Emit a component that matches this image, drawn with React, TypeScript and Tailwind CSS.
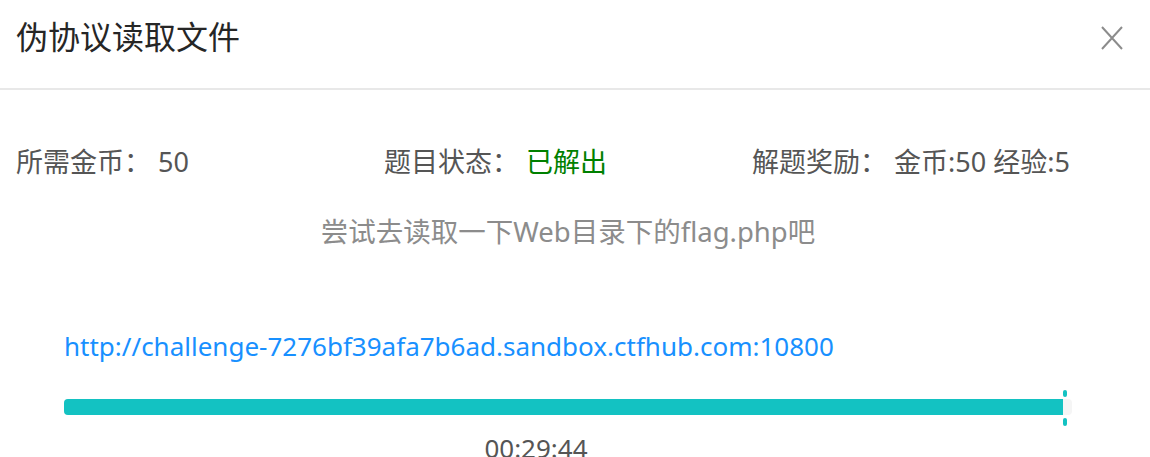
export default function App() {
  const font = { fontFamily: '"Noto Sans", "Noto Sans CJK SC", sans-serif' };
  return (
    <div className="w-[1150px] h-[457px] bg-white overflow-hidden relative" style={font}>
      <div className="h-[90px] border-b-2 border-[#e8e8e8] flex items-start justify-between pl-4 pr-[27px] pt-[17px]">
        <div className="text-[32px] leading-[40px] text-[#262626]">伪协议读取文件</div>
        <svg width="22" height="24" viewBox="0 0 22 24" className="mt-[9px]">
          <path d="M1 1 L21 23 M21 1 L1 23" stroke="#8c8c8c" strokeWidth="2" fill="none" />
        </svg>
      </div>
      <div className="pl-4 pr-[30px]">
        <div className="grid grid-cols-3 mt-[54px] text-[27px] leading-[36px] text-[#555]">
          <div>所需金币： 50</div>
          <div>
            题目状态： <span className="text-[#008000]">已解出</span>
          </div>
          <div>解题奖励： 金币:50 经验:5</div>
        </div>
        <div className="mt-[34px] text-center text-[27.5px] leading-[36px] text-[#8c8c8c]">
          尝试去读取一下Web目录下的flag.php吧
        </div>
        <div className="px-12">
          <div className="mt-[78px] text-[26px] leading-[36px] text-[#1890ff]">
            http://challenge-7276bf39afa7b6ad.sandbox.ctfhub.com:10800
          </div>
          <div className="relative mt-[35px] h-[16px] bg-[#f5f5f5] rounded-sm">
            <div className="h-full w-[999px] bg-[#13c2c2] rounded-l-sm" />
            <div className="absolute left-[999px] top-[-9px] w-[4px] h-[7px] rounded-full bg-[#13c2c2]" />
            <div className="absolute left-[999px] top-[19px] w-[4px] h-[8px] rounded-full bg-[#13c2c2]" />
          </div>
        </div>
      </div>
      <div className="w-[1072px] text-center mt-[15px] text-[26px] leading-[36px] text-[#555]">00:29:44</div>
    </div>
  );
}
